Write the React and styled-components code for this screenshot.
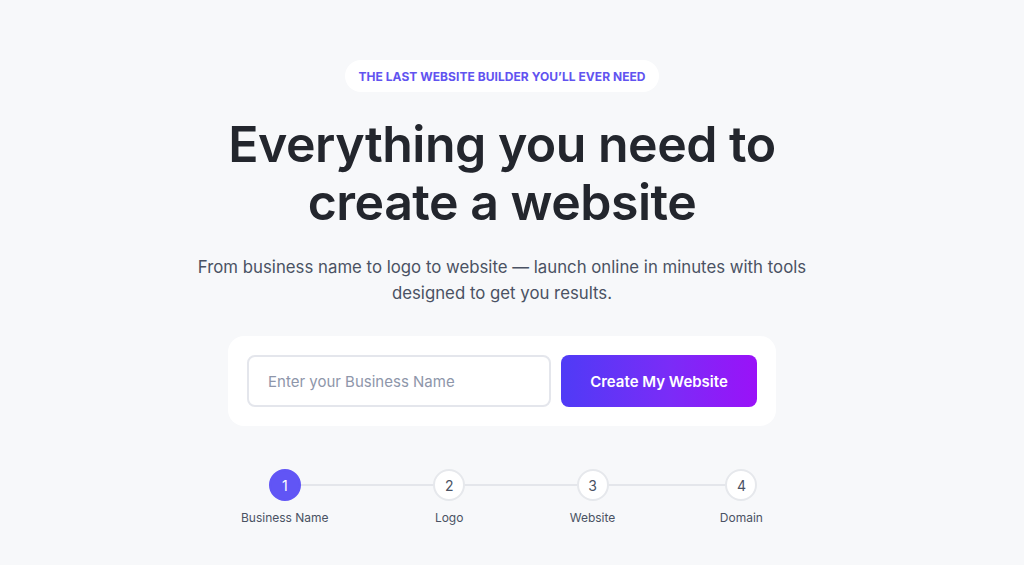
import React from 'react'
import styled, { createGlobalStyle } from 'styled-components'

const GlobalStyle = createGlobalStyle`
  html, body {
    margin: 0;
    padding: 0;
    background: #f7f8fa;
  }
  body {
    font-family: "Inter", "Open Sans", sans-serif;
    color: #23262d;
  }
`;

const Page = styled.div`
  width: 1004px;
  min-height: 565px;
  padding-top: 60px;
  box-sizing: border-box;
  display: flex;
  flex-direction: column;
  align-items: center;
`;

const Badge = styled.div`
  height: 32px;
  padding: 0 13px;
  display: flex;
  align-items: center;
  background: #ffffff;
  border-radius: 16px;
  color: #6153f0;
  font-size: 12px;
  font-weight: 700;
  letter-spacing: 0.05px;
  text-transform: uppercase;
`;

const Title = styled.h1`
  margin: 23px 0 0;
  font-size: 50px;
  line-height: 58px;
  font-weight: 600;
  letter-spacing: -0.5px;
  text-align: center;
  color: #23262d;
`;

const Subtitle = styled.p`
  margin: 23px 0 0;
  width: 640px;
  font-size: 16.8px;
  line-height: 26px;
  color: #4a5263;
  text-align: center;
`;

const FormCard = styled.div`
  margin-top: 30px;
  width: 548px;
  box-sizing: border-box;
  padding: 19px;
  display: flex;
  gap: 10px;
  background: #ffffff;
  border-radius: 16px;
`;

const Input = styled.input`
  width: 304px;
  height: 52px;
  box-sizing: border-box;
  padding: 0 19px;
  border: 2px solid #e4e6ec;
  border-radius: 8px;
  font-family: inherit;
  font-size: 15px;
  color: #23262d;
  outline: none;
  &::placeholder {
    color: #8e96aa;
  }
`;

const Button = styled.button`
  flex: 1;
  height: 52px;
  border: none;
  border-radius: 8px;
  background: linear-gradient(90deg, #4f3bf6 0%, #7a2cf7 55%, #9a12f8 100%);
  color: #ffffff;
  font-family: inherit;
  font-size: 15px;
  font-weight: 600;
  cursor: pointer;
`;

const Steps = styled.div`
  position: relative;
  margin-top: 43px;
  width: 522px;
  display: flex;
  justify-content: space-between;
`;

const Track = styled.div`
  position: absolute;
  left: 43px;
  right: 22px;
  top: 15px;
  height: 2px;
  background: #e4e6eb;
`;

const Step = styled.div`
  position: relative;
  display: flex;
  flex-direction: column;
  align-items: center;
`;

const Circle = styled.div`
  width: 32px;
  height: 32px;
  box-sizing: border-box;
  border-radius: 50%;
  display: flex;
  align-items: center;
  justify-content: center;
  font-size: 14px;
  background: ${p => (p.$active ? '#6155f5' : '#ffffff')};
  border: 2px solid ${p => (p.$active ? '#6155f5' : '#e6e8ec')};
  color: ${p => (p.$active ? '#ffffff' : '#4a5263')};
`;

const StepLabel = styled.div`
  margin-top: 9px;
  font-size: 12px;
  line-height: 16px;
  color: #4a5263;
  white-space: nowrap;
`;

const steps = ['Business Name', 'Logo', 'Website', 'Domain'];

export default function App() {
  return (
    <>
      <GlobalStyle />
      <Page>
        <Badge>The last website builder you’ll ever need</Badge>
        <Title>
          Everything you need to
          <br />
          create a website
        </Title>
        <Subtitle>
          From business name to logo to website — launch online in minutes with tools designed to get you results.
        </Subtitle>
        <FormCard>
          <Input placeholder="Enter your Business Name" />
          <Button>Create My Website</Button>
        </FormCard>
        <Steps>
          <Track />
          {steps.map((label, i) => (
            <Step key={label}>
              <Circle $active={i === 0}>{i + 1}</Circle>
              <StepLabel>{label}</StepLabel>
            </Step>
          ))}
        </Steps>
      </Page>
    </>
  )
}
